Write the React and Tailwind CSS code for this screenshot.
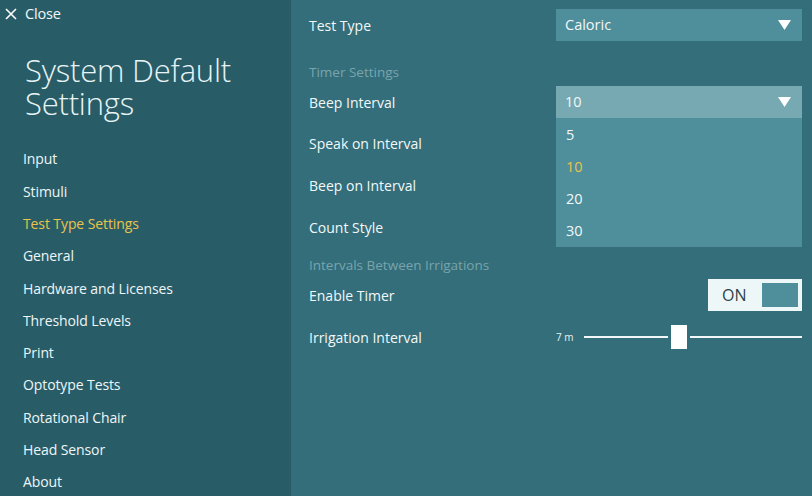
import { useState } from 'react';

const navItems = ['Input', 'Stimuli', 'Test Type Settings', 'General', 'Hardware and Licenses', 'Threshold Levels', 'Print', 'Optotype Tests', 'Rotational Chair', 'Head Sensor', 'About'];

function Arrow() {
  return (
    <svg width="13" height="10" viewBox="0 0 13 10" className="shrink-0">
      <path d="M0 0 H13 L6.5 10 Z" fill="#ffffff" />
    </svg>
  );
}

function Row({ label, children, className = 'h-[42px]' }) {
  return (
    <div className={`flex items-center ${className}`}>
      <div className="w-[247px] text-[14px] text-[#f2f8f9]">{label}</div>
      <div className="flex-1">{children}</div>
    </div>
  );
}

export default function App() {
  const [active] = useState('Test Type Settings');
  const font = { fontFamily: '"Open Sans", "Noto Sans", sans-serif' };

  return (
    <div className="flex w-[812px] h-[496px] overflow-hidden" style={font}>
      {/* Sidebar */}
      <div className="w-[291px] h-full bg-[#285d68] flex flex-col">
        <div className="flex items-center h-[29px] mt-[3px] pl-[5px] text-[#f2f8f9]">
          <svg width="12" height="12" viewBox="0 0 12 12" className="mr-[8px]">
            <path d="M1 1 L11 11 M11 1 L1 11" stroke="#ffffff" strokeWidth="1.6" />
          </svg>
          <span className="text-[14.5px] tracking-[-0.2px]">Close</span>
        </div>
        <h1 className="pl-[25px] mt-[29px] text-[31px] font-light text-[#e9f4f6] tracking-[-0.2px]">
          <div className="h-[33px] leading-[33px]">System Default</div>
          <div className="h-[33px] leading-[33px]">Settings</div>
        </h1>
        <nav className="mt-[23px] flex flex-col">
          {navItems.map(n => (
            <div key={n}
              className={`h-[32.3px] flex items-center pl-[23px] text-[14px] tracking-[-0.1px] ${n === active ? 'text-[#e8c44a]' : 'text-[#eef6f7]'}`}>
              {n}
            </div>
          ))}
        </nav>
      </div>

      {/* Main */}
      <div className="flex-1 h-full bg-[#336e7a] pl-[18px] pr-[10px] pt-[4px] relative">
        <Row label="Test Type">
          <div className="h-[32px] bg-[#4f8e9b] flex items-center justify-between pl-[9px] pr-[11px] text-[14.5px] text-[#f2f8f9]">
            Caloric <Arrow />
          </div>
        </Row>
        <div className="h-[20px] flex items-center mt-[16px] text-[13.5px] text-[#7aa4ad]">Timer Settings</div>
        <Row label="Beep Interval" className="h-[40px]">
          <div className="relative">
            <div className="h-[32px] bg-[#77a9b3] flex items-center justify-between pl-[9px] pr-[11px] text-[14.5px] text-[#f2f8f9]">
              10 <Arrow />
            </div>
            <div className="absolute left-0 right-0 top-[32px] h-[129px] bg-[#4f8e9b] z-10 pt-[1px]">
              {['5', '10', '20', '30'].map(v => (
                <div key={v} className={`h-[32px] flex items-center pl-[10px] text-[14.5px] ${v === '10' ? 'text-[#e8c44a]' : 'text-[#f2f8f9]'}`}>{v}</div>
              ))}
            </div>
          </div>
        </Row>
        <Row label="Speak on Interval" />
        <Row label="Beep on Interval" />
        <Row label="Count Style" />
        <div className="h-[34px] flex items-center text-[13.5px] text-[#7aa4ad]">Intervals Between Irrigations</div>
        <Row label="Enable Timer" className="h-[26px]">
          <div className="flex justify-end">
            <div className="w-[94px] h-[32px] bg-[#eef7f8] flex items-center justify-between pl-[14px] pr-[4px]">
              <span className="text-[16px] text-[#2a4248]">ON</span>
              <div className="w-[36px] h-[24px] bg-[#4f8e9b]" />
            </div>
          </div>
        </Row>
        <Row label="Irrigation Interval" className="h-[58px]">
          <div className="flex items-center">
            <span className="text-[10px] text-[#e6f1f3] w-[28px]">7 m</span>
            <div className="flex-1 flex items-center">
              <div className="w-[84px] h-[2px] bg-[#f2f8f9]" />
              <div className="w-[16px] h-[24px] bg-white mx-[3px]" />
              <div className="flex-1 h-[2px] bg-[#f2f8f9]" />
            </div>
          </div>
        </Row>
      </div>
    </div>
  );
}
